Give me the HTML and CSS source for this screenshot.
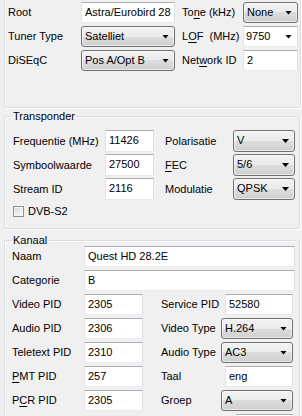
FILE: index.html
```html
<!DOCTYPE html>
<html lang="nl">
<head>
  <meta charset="UTF-8">
  <meta name="viewport" content="width=device-width, initial-scale=1.0">
  <title>Kanaal bewerken</title>
  <link rel="stylesheet" href="styles.css">
</head>
<body>
  <div class="panel">
    <div class="form form-top">
      <span class="lbl">Root</span>
      <div class="edit">Astra/Eurobird 28</div>
      <span class="lbl lbl-2">To<u>n</u>e (kHz)</span>
      <div class="combo">None</div>

      <span class="lbl">Tuner Type</span>
      <div class="combo">Satelliet</div>
      <span class="lbl lbl-2">L<u>O</u>F&nbsp; (MHz)</span>
      <div class="combo combo-edit">9750</div>

      <span class="lbl">DiSEqC</span>
      <div class="combo">Pos A/Opt B</div>
      <span class="lbl lbl-2">Net<u>w</u>ork ID</span>
      <div class="edit">2</div>
    </div>
  </div>

  <fieldset class="group group-transponder">
    <legend>Transponder</legend>
    <div class="form form-transponder">
      <span class="lbl">Frequentie (MHz)</span>
      <div class="edit">11426</div>
      <span class="lbl lbl-2">Polarisatie</span>
      <div class="combo">V</div>

      <span class="lbl">Symboolwaarde</span>
      <div class="edit">27500</div>
      <span class="lbl lbl-2"><u>F</u>EC</span>
      <div class="combo">5/6</div>

      <span class="lbl">Stream ID</span>
      <div class="edit">2116</div>
      <span class="lbl lbl-2">Modulatie</span>
      <div class="combo">QPSK</div>
    </div>
    <div class="check">
      <span class="check-box"></span>
      <span>DVB-S2</span>
    </div>
  </fieldset>

  <fieldset class="group group-kanaal">
    <legend>Kanaal</legend>
    <div class="form form-kanaal">
      <span class="lbl">Naam</span>
      <div class="edit wide">Quest HD 28.2E</div>

      <span class="lbl">Categorie</span>
      <div class="edit wide">B</div>

      <span class="lbl">Video PID</span>
      <div class="edit">2305</div>
      <span class="lbl lbl-2">Service PID</span>
      <div class="edit edit-2">52580</div>

      <span class="lbl">Audio PID</span>
      <div class="edit">2306</div>
      <span class="lbl lbl-2">Video Type</span>
      <div class="combo">H.264</div>

      <span class="lbl">Teletext PID</span>
      <div class="edit">2310</div>
      <span class="lbl lbl-2">Audio Type</span>
      <div class="combo">AC3</div>

      <span class="lbl"><u>P</u>MT PID</span>
      <div class="edit">257</div>
      <span class="lbl lbl-2">Taal</span>
      <div class="edit edit-2">eng</div>

      <span class="lbl">P<u>C</u>R PID</span>
      <div class="edit">2305</div>
      <span class="lbl lbl-2">Groep</span>
      <div class="combo">A</div>

      <span class="lbl"></span>
      <span></span>
      <span></span>
      <div class="edit edit-last"></div>
    </div>
  </fieldset>
</body>
</html>
```

FILE: styles.css
```css
* {
  box-sizing: border-box;
}

body {
  margin: 0;
  width: 302px;
  height: 416px;
  overflow: hidden;
  background: #f0f0f0;
  font-family: "Liberation Sans", Arial, sans-serif;
  font-size: 11px;
  line-height: 13px;
  color: #000;
}

u {
  text-decoration-thickness: 1px;
  text-underline-offset: 2px;
}

/* top box, its top edge is scrolled off */
.panel {
  margin: -4px 1px 0 4px;
  height: 112px;
  padding: 5px 0 0 3px;
  border: 1px solid #d5dfe5;
  border-radius: 3px;
  box-shadow: inset 1px 1px 0 #fff, 1px 1px 0 #fff;
}

.group {
  margin: 0 2px 0 4px;
  padding: 0 0 0 7px;
  border: 1px solid #d5dfe5;
  border-radius: 3px;
  box-shadow: inset 1px 1px 0 #fff, 1px 1px 0 #fff;
  min-width: 0;
}

.group legend {
  padding: 0 1px;
}

.group-transponder {
  margin-top: 2px;
  padding-bottom: 10px;
}

.group-kanaal {
  margin-top: 5px;
  padding-bottom: 0;
}

.form {
  display: grid;
}

.form-top {
  grid-template-columns: 73px 94px 68px 55px;
  grid-auto-rows: 21px;
  row-gap: 3px;
}

.form-transponder {
  margin: 7px 0 0 1px;
  grid-template-columns: 92px 49px 79px 62px;
  grid-auto-rows: 22px;
  row-gap: 2px;
}

.form-kanaal {
  margin-top: -1px;
  grid-template-columns: 72px 59px 78px 72px;
  grid-auto-rows: 21px;
  row-gap: 3px;
}

.lbl {
  display: flex;
  align-items: center;
  white-space: nowrap;
}

.form-top .lbl-2 {
  padding-left: 7px;
}

.form-transponder .lbl-2 {
  padding-left: 11px;
}

.form-kanaal .lbl-2 {
  padding-left: 18px;
}

.edit {
  display: flex;
  align-items: center;
  padding: 0 2px 1px 3px;
  background: #fff;
  border: 1px solid;
  border-color: #abadb3 #dbdfe6 #e3e9ef #e2e3ea;
  white-space: nowrap;
  overflow: hidden;
}

.edit.wide {
  grid-column: 2 / 5;
  margin-right: -2px;
}

.edit-2 {
  margin-left: 4px;
}

.edit-last {
  margin-left: 15px;
}

.combo {
  position: relative;
  display: flex;
  align-items: center;
  padding: 0 16px 1px 3px;
  border: 1px solid #707070;
  border-radius: 3px;
  background: linear-gradient(#f2f2f2, #ebebeb 50%, #dddddd 50%, #cfcfcf);
  box-shadow: inset 0 0 0 1px rgba(255, 255, 255, 0.5);
  white-space: nowrap;
  overflow: hidden;
}

.combo::after {
  content: "";
  position: absolute;
  right: 5px;
  top: 50%;
  width: 7px;
  height: 4px;
  margin-top: -2px;
  background: #000;
  clip-path: polygon(0 0, 100% 0, 50% 100%);
}

.combo-edit {
  border-radius: 0;
  border-color: #abadb3 #dbdfe6 #e3e9ef #e2e3ea;
  background: #fff;
  box-shadow: none;
  padding-left: 2px;
}

.check {
  display: flex;
  align-items: center;
  gap: 4px;
  margin: 5px 0 0 1px;
  height: 13px;
}

.check-box {
  width: 11px;
  height: 11px;
  border: 1px solid #8e8f8f;
  background: linear-gradient(135deg, #d8d8d8, #fafafa);
  box-shadow: inset 0 0 0 1px #f4f4f4;
}
```
